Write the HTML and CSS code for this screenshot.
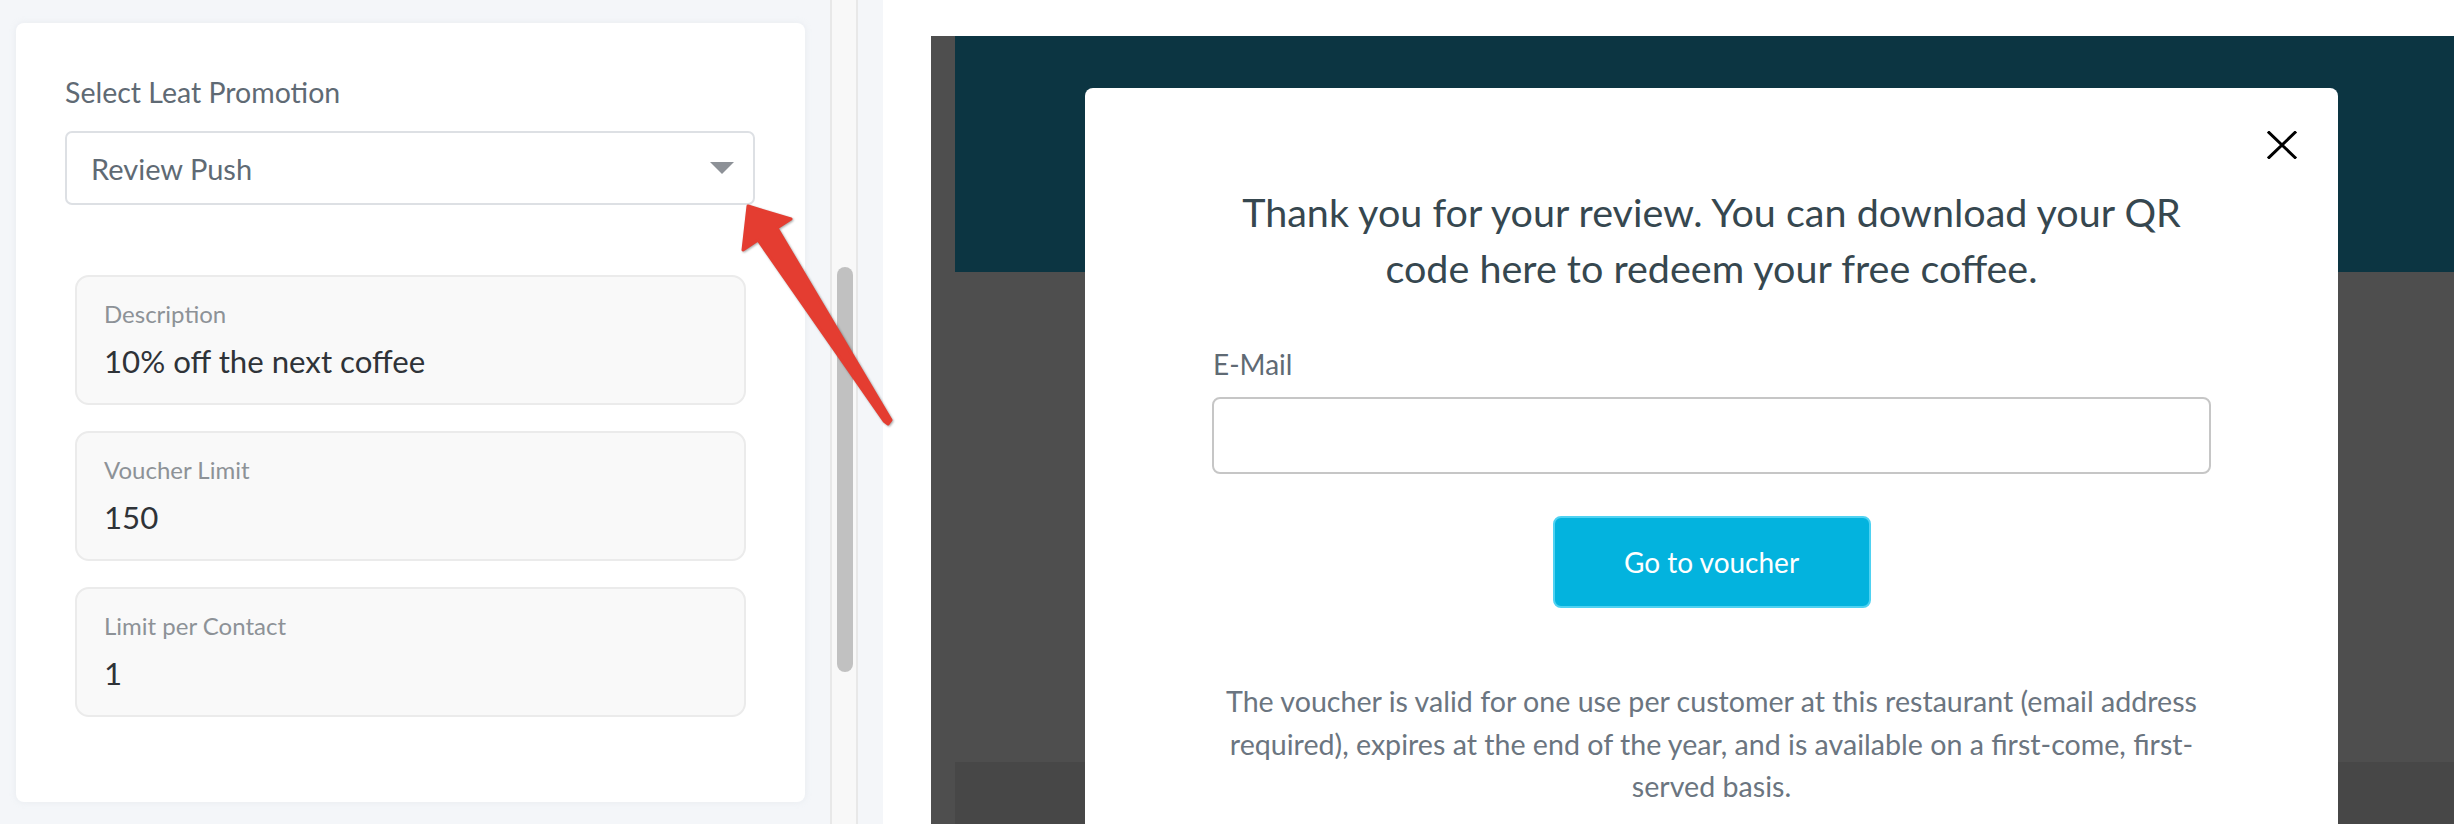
FILE: index.html
```html
<!DOCTYPE html>
<html lang="en">
<head>
<meta charset="utf-8">
<title>Leat Promotion</title>
<link rel="stylesheet" href="styles.css">
</head>
<body>
<div class="screen">
  <aside class="panel">
    <section class="card">
      <div class="field-label">Select Leat Promotion</div>
      <div class="select">
        <span class="select-value">Review Push</span>
        <span class="caret"></span>
      </div>
      <div class="details">
        <div class="box">
          <div class="box-label">Description</div>
          <div class="box-value">10% off the next coffee</div>
        </div>
        <div class="box">
          <div class="box-label">Voucher Limit</div>
          <div class="box-value">150</div>
        </div>
        <div class="box">
          <div class="box-label">Limit per Contact</div>
          <div class="box-value">1</div>
        </div>
      </div>
    </section>
    <div class="gutter-wrap">
      <div class="gutter"><div class="thumb"></div></div>
    </div>
  </aside>
  <div class="spacer"></div>
  <main class="preview">
    <div class="page">
      <div class="page-header"></div>
      <div class="page-body"></div>
      <div class="page-footer"></div>
    </div>
    <div class="modal">
      <button class="close" aria-label="Close">
        <svg width="30" height="28" viewBox="0 0 30 28"><path d="M2 1.5 L28 26.5 M28 1.5 L2 26.5" stroke="#000" stroke-width="3" stroke-linecap="square" fill="none"/></svg>
      </button>
      <h1 class="title">Thank you for your review. You can download your QR code here to redeem your free coffee.</h1>
      <label class="email-label">E-Mail</label>
      <div class="email-input"></div>
      <div class="btn-row"><button class="btn">Go to voucher</button></div>
      <p class="terms">The voucher is valid for one use per customer at this restaurant (email address required), expires at the end of the year, and is available on a first-come, first-served basis.</p>
    </div>
  </main>
</div>
<svg class="arrow" width="2454" height="824" viewBox="0 0 2454 824">
  <polygon points="748,206 791,219 777,228 891,420 888,424 884,421 758,240 743,250" fill="#e43d31" stroke="#e43d31" stroke-width="3" stroke-linejoin="round"/>
</svg>
</body>
</html>
```
FILE: styles.css
```css
* { box-sizing: border-box; }
html, body {
  margin: 0;
  padding: 0;
  width: 2454px;
  height: 824px;
  overflow: hidden;
  background: #ffffff;
  font-family: Lato, "Open Sans", "Liberation Sans", sans-serif;
}
.screen {
  display: flex;
  height: 824px;
  position: relative;
}
.panel {
  width: 883px;
  flex: none;
  background: #f4f6f9;
  display: flex;
  padding: 23px 0 0 16px;
}
.card {
  width: 789px;
  height: 779px;
  background: #ffffff;
  border-radius: 8px;
  padding: 52px 50px 0 49px;
  box-shadow: 0 0 6px rgba(200, 206, 214, 0.25);
}
.field-label {
  font-size: 28.5px;
  line-height: 34px;
  color: #5f6a74;
  margin-bottom: 22px;
}
.select {
  height: 74px;
  border: 2px solid #dde0e4;
  border-radius: 7px;
  display: flex;
  align-items: center;
  justify-content: space-between;
  padding: 0 19px 0 24px;
}
.select-value {
  font-size: 29px;
  color: #5f6a74;
}
.caret {
  width: 0;
  height: 0;
  border-left: 12.5px solid transparent;
  border-right: 12.5px solid transparent;
  border-top: 12px solid #8d9197;
}
.details {
  padding: 70px 9px 0 10px;
  display: flex;
  flex-direction: column;
  gap: 26px;
}
.box {
  height: 130px;
  background: #f9f9f9;
  border: 2px solid #ebebeb;
  border-radius: 14px;
  padding: 22px 27px 0;
}
.box-label {
  font-size: 24px;
  line-height: 29px;
  color: #8d9297;
}
.box-value {
  font-size: 31.2px;
  line-height: 38px;
  color: #2f3338;
  margin-top: 14px;
}
.gutter-wrap {
  width: 78px;
  flex: none;
  padding-left: 25px;
  margin-top: -23px;
}
.gutter {
  width: 28px;
  height: 824px;
  background: #f8f8f8;
  border-left: 2px solid #e8e8e8;
  border-right: 2px solid #e8e8e8;
  padding: 267px 0 0 5px;
}
.thumb {
  width: 16px;
  height: 405px;
  background: #c1c1c1;
  border-radius: 8px;
}
.spacer {
  width: 48px;
  flex: none;
}
.preview {
  flex: 1;
  margin-top: 36px;
  background: #4e4e4e;
  position: relative;
  overflow: hidden;
  padding-left: 24px;
}
.page {
  display: flex;
  flex-direction: column;
  height: 100%;
}
.page-header {
  height: 236px;
  background: #0c3542;
}
.page-body {
  height: 490px;
  background: #4e4e4e;
}
.page-footer {
  flex: 1;
  background: #474747;
}
.modal {
  position: absolute;
  left: 154px;
  top: 52px;
  width: 1253px;
  height: 900px;
  background: #ffffff;
  border-radius: 8px 8px 0 0;
  padding: 96px 127px 0;
}
.close {
  position: absolute;
  right: 41px;
  top: 43px;
  width: 30px;
  height: 28px;
  padding: 0;
  border: 0;
  background: none;
  display: block;
}
.close svg { display: block; }
.title {
  margin: 0 auto;
  max-width: 990px;
  font-size: 39.5px;
  line-height: 56px;
  font-weight: 400;
  color: #36474f;
  text-align: center;
}
.email-label {
  display: block;
  margin-top: 51px;
  padding-left: 1px;
  font-size: 28px;
  line-height: 34px;
  color: #5f6a74;
}
.email-input {
  margin-top: 16px;
  height: 77px;
  border: 2px solid #c6c6c6;
  border-radius: 8px;
}
.btn-row {
  display: flex;
  justify-content: center;
  margin-top: 42px;
}
.btn {
  width: 318px;
  height: 92px;
  background: #03b3de;
  border: 2px solid #4fd2f2;
  border-radius: 8px;
  color: #ffffff;
  font-family: Lato, "Open Sans", "Liberation Sans", sans-serif;
  font-size: 28px;
  padding: 0;
}
.terms {
  margin: 72px -10px 0;
  font-size: 28.6px;
  line-height: 42.5px;
  color: #6b7580;
  text-align: center;
}
.arrow {
  position: absolute;
  left: 0;
  top: 0;
  pointer-events: none;
  filter: drop-shadow(1px 1px 1px rgba(0, 0, 0, 0.35));
}
```
